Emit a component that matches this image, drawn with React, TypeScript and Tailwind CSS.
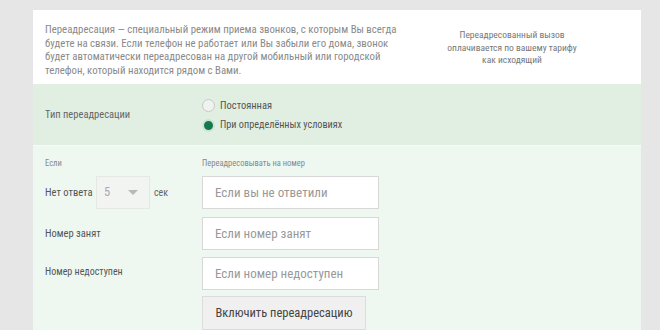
import React from "react";

const F = '"Liberation Sans Narrow", "Roboto Condensed", Roboto, sans-serif';

export default function App() {
  return (
    <div className="w-[660px] h-[330px] overflow-hidden bg-[#e6e6e6] pt-[10px] pl-[33px]" style={{ fontFamily: F }}>
      <div className="w-[608px] h-[320px] flex flex-col">
        {/* top */}
        <div className="bg-white h-[74px] flex pl-[12px] pt-[13px]">
          <div className="w-[345px] whitespace-nowrap text-[10.8px] leading-[13.5px] text-[#8a8a8a]">
            Переадресация — специальный режим приема звонков, с которым Вы всегда<br />
            будете на связи. Если телефон не работает или Вы забыли его дома, звонок<br />
            будет автоматически переадресован на другой мобильный или городской<br />
            телефон, который находится рядом с Вами.
          </div>
          <div className="w-[180px] ml-[32px] pt-[6px] text-center text-[9.5px] leading-[12.5px] text-[#777]">
            Переадресованный вызов<br />оплачивается по вашему тарифу<br />как исходящий
          </div>
        </div>
        {/* type */}
        <div className="bg-[#e1efe3] h-[62px] flex items-center pl-[12px] pt-[2px]">
          <div className="w-[157px] text-[10.5px] text-[#666]">Тип переадресации</div>
          <div className="flex flex-col gap-[4px]">
            <div className="flex items-center gap-[5px]">
              <span className="w-[13px] h-[13px] rounded-full border border-[#c8c8c8] bg-[#eef3ef]" />
              <span className="text-[10.5px] text-[#555]">Постоянная</span>
            </div>
            <div className="flex items-center gap-[5px]">
              <span className="w-[13px] h-[13px] rounded-full border-[2px] border-[#cfe3d6] bg-[#137a4d]" />
              <span className="text-[10.2px] text-[#555]">При определённых условиях</span>
            </div>
          </div>
        </div>
        {/* form */}
        <div className="bg-[#eef8f1] flex-1 pl-[12px] pt-[11px] border-t border-[#f5fbf7]">
          <div className="flex text-[8.5px] text-[#888] h-[15px]">
            <div className="w-[157px]">Если</div>
            <div>Переадресовывать на номер</div>
          </div>
          <div className="flex items-center h-[33px] mt-[4px]">
            <div className="w-[157px] flex items-center">
              <span className="w-[51px] whitespace-nowrap text-[10.5px] text-[#555]">Нет ответа</span>
              <div className="w-[54px] h-[33px] border border-[#e4e9e5] bg-[#f1f4f1] flex items-center justify-between pl-[7px] pr-[11px]">
                <span className="text-[12.5px] text-[#aaa]">5</span>
                <span className="w-0 h-0 border-l-[5px] border-r-[5px] border-t-[5px] border-l-transparent border-r-transparent border-t-[#b8b8b8]" />
              </div>
              <span className="ml-[4px] text-[10px] text-[#666]">сек</span>
            </div>
            <div className="w-[177px] h-[33px] bg-white border border-[#d8d8d8] flex items-center pl-[12px] text-[13px] text-[#999]">Если вы не ответили</div>
          </div>
          <div className="flex items-center h-[33px] mt-[8px]">
            <div className="w-[157px] text-[10.5px] text-[#555]">Номер занят</div>
            <div className="w-[177px] h-[33px] bg-white border border-[#d8d8d8] flex items-center pl-[12px] text-[13px] text-[#999]">Если номер занят</div>
          </div>
          <div className="flex items-center h-[33px] mt-[7px]">
            <div className="w-[157px] text-[10px] text-[#555] -mt-[4px]">Номер недоступен</div>
            <div className="w-[177px] h-[33px] bg-white border border-[#d8d8d8] flex items-center pl-[12px] text-[13px] text-[#999]">Если номер недоступен</div>
          </div>
          <div className="flex mt-[6px]">
            <div className="w-[157px]" />
            <div className="w-[164px] h-[34px] bg-[#f0f0f0] border border-[#dcdcdc] flex items-center justify-center text-[12.5px] text-[#444]">Включить переадресацию</div>
          </div>
        </div>
      </div>
    </div>
  );
}
